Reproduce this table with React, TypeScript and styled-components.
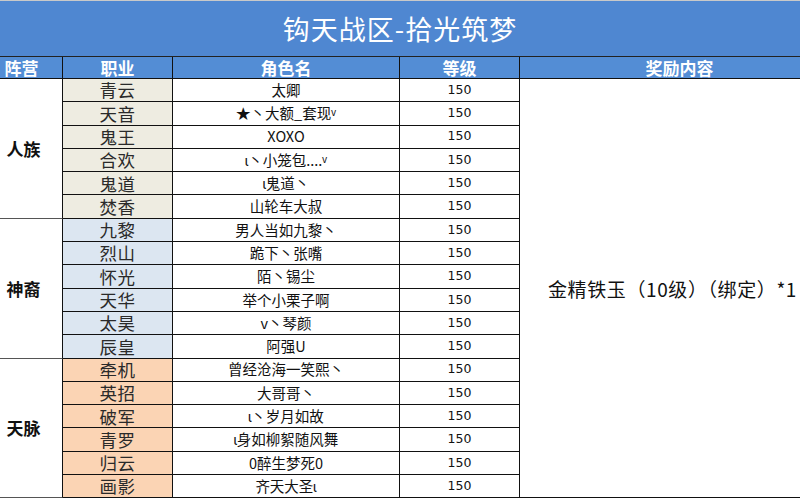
import React from 'react'
import styled, { createGlobalStyle } from 'styled-components'

const GlobalStyle = createGlobalStyle`
html, body {
  margin: 0;
  padding: 0;
  background: #fff;
  overflow: hidden;
}
`

type Tone = 'tan' | 'blue' | 'peach'

const tones: Record<Tone, string> = {
  tan: '#eeece1',
  blue: '#dce6f1',
  peach: '#fbd4b4',
}

const groups: { faction: string; tone: Tone; rows: [string, string][] }[] = [
  {
    faction: '人族',
    tone: 'tan',
    rows: [
      ['青云', '太卿'],
      ['天音', '★丶大额_套现ᵛ'],
      ['鬼王', 'XOXO'],
      ['合欢', 'ɩ丶小笼包....ᵛ'],
      ['鬼道', 'ɩ鬼道丶'],
      ['焚香', '山轮车大叔'],
    ],
  },
  {
    faction: '神裔',
    tone: 'blue',
    rows: [
      ['九黎', '男人当如九黎丶'],
      ['烈山', '跪下丶张嘴'],
      ['怀光', '陌丶锡尘'],
      ['天华', '举个小栗子啊'],
      ['太昊', 'v丶琴颜'],
      ['辰皇', '阿强U'],
    ],
  },
  {
    faction: '天脉',
    tone: 'peach',
    rows: [
      ['牵机', '曾经沧海一笑熙丶'],
      ['英招', '大哥哥丶'],
      ['破军', 'ɩ丶岁月如故'],
      ['青罗', 'ɩ身如柳絮随风舞'],
      ['归云', '0醉生梦死0'],
      ['画影', '齐天大圣ɩ'],
    ],
  },
]

const App = () => {
  let line = 2
  return (
    <Page>
      <GlobalStyle />
      <Title>钩天战区-拾光筑梦</Title>
      <Sheet>
        <Head>阵营</Head>
        <Head>职业</Head>
        <Head>角色名</Head>
        <Head>等级</Head>
        <Head>奖励内容</Head>
        {groups.map((g) => {
          const start = line
          line += g.rows.length
          return (
            <React.Fragment key={g.faction}>
              <Faction $row={start} $span={g.rows.length}>{g.faction}</Faction>
              {g.rows.map(([job, name]) => (
                <React.Fragment key={job}>
                  <Job $tone={g.tone}>{job}</Job>
                  <Name>{name}</Name>
                  <Level>150</Level>
                </React.Fragment>
              ))}
            </React.Fragment>
          )
        })}
        <Reward>金精铁玉（10级）（绑定）*1</Reward>
      </Sheet>
    </Page>
  )
}

export default App

const Page = styled.div`
width: 800px;
height: 500px;
overflow: hidden;
font-family: "Noto Sans CJK SC", "Liberation Sans", sans-serif;
color: #111;
`
const Title = styled.div`
height: 55px;
border-top: 1px solid #c9c9c9;
border-bottom: 1px solid #222;
background: #4f87d1;
color: #fff;
font-size: 27px;
display: flex;
align-items: center;
justify-content: center;
letter-spacing: 1px;
`
const Sheet = styled.div`
display: grid;
grid-template-columns: 82px 110px 227px 120px 320px;
grid-template-rows: 22px repeat(18, 23.3px);
margin-left: -19px;
width: 859px;
`
const Head = styled.div`
display: flex;
align-items: center;
justify-content: center;
background: #538dd5;
color: #fff;
font-weight: bold;
font-size: 17px;
line-height: 1;
border-right: 1px solid #111;
border-bottom: 1px solid #111;
`
const Faction = styled.div<{ $row: number; $span: number }>`
grid-column: 1;
grid-row: ${(p) => p.$row} / span ${(p) => p.$span};
display: flex;
align-items: center;
justify-content: center;
font-size: 17px;
font-weight: bold;
border-right: 1px solid #111;
border-bottom: 1px solid #555;
padding-left: 4px;
`
const Job = styled.div<{ $tone: Tone }>`
grid-column: 2;
display: flex;
align-items: center;
justify-content: center;
background: ${(p) => tones[p.$tone]};
font-size: 17.5px;
line-height: 1;
letter-spacing: 0.5px;
color: #2a2a2a;
border-right: 1px solid #111;
border-bottom: 1px solid #111;
`
const Name = styled.div`
grid-column: 3;
display: flex;
align-items: center;
justify-content: center;
font-size: 14.5px;
line-height: 1;
border-right: 1px solid #111;
border-bottom: 1px solid #111;
white-space: nowrap;
`
const Level = styled.div`
grid-column: 4;
display: flex;
align-items: center;
justify-content: center;
font-family: "DejaVu Sans", "Liberation Sans", sans-serif;
font-size: 12.5px;
line-height: 1;
border-right: 1px solid #111;
border-bottom: 1px solid #111;
`
const Reward = styled.div`
grid-column: 5;
grid-row: 2 / span 18;
display: flex;
align-items: center;
padding-left: 28px;
font-size: 19px;
letter-spacing: 0.6px;
white-space: nowrap;
border-bottom: 1px solid #111;
`
